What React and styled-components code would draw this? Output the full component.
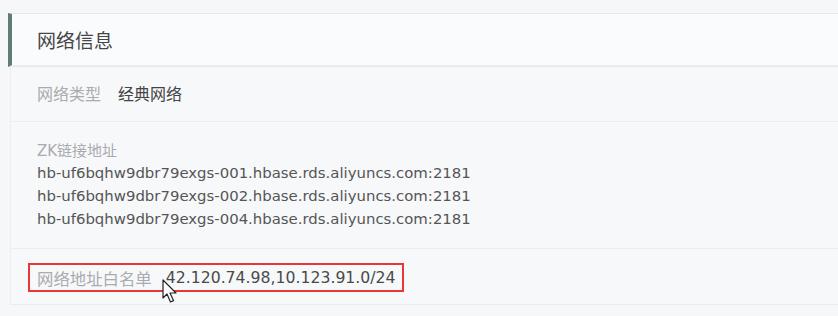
import React from "react";
import styled, { createGlobalStyle } from "styled-components";

const Global = createGlobalStyle`
  html, body { margin: 0; padding: 0; background: #f6f7f9; }
  body { font-family: "DejaVu Sans", "Noto Sans CJK SC", sans-serif; }
`;

const Page = styled.div`
  width: 838px;
  height: 316px;
  padding: 13px 0 0 8px;
  box-sizing: border-box;
  overflow: hidden;
  position: relative;
`;

const Header = styled.div`
  height: 54px;
  box-sizing: border-box;
  display: flex;
  align-items: center;
  padding-left: 25px;
  background: #fafbfc;
  border-left: 4px solid #5f7c77;
  border-top: 1px solid #e6e8eb;
  border-bottom: 2px solid #e9ebee;
  font-family: "Noto Sans CJK SC", sans-serif;
  font-size: 19px;
  color: #454545;
`;

const Body = styled.div`
  margin-left: 2px;
  border-left: 1px solid #eceef1;
  background: #f7f8fa;
`;

const Section = styled.div`
  box-sizing: border-box;
  padding: ${(p) => p.$pad || "0"};
  padding-left: 26px;
  min-height: ${(p) => p.$h || "auto"};
  display: flex;
  flex-direction: ${(p) => (p.$column ? "column" : "row")};
  align-items: ${(p) => (p.$column ? "flex-start" : "center")};
  border-bottom: 1px solid #eaecef;
`;

const Row = styled.div`
  display: flex;
  align-items: center;
  gap: ${(p) => p.$gap || "17px"};
`;

const Label = styled.span`
  font-family: "Noto Sans CJK SC", sans-serif;
  font-size: 16px;
  color: #a9abae;
  line-height: 22px;
`;

const WideLabel = styled(Label)`
  font-size: 16.4px;
`;

const ZkLabel = styled(Label)`
  font-family: "DejaVu Sans", "Noto Sans CJK SC", sans-serif;
  font-size: 15px;
`;

const Value = styled.span`
  font-family: "Noto Sans CJK SC", sans-serif;
  font-size: 16px;
  color: #444;
  line-height: 22px;
`;

const Mono = styled.div`
  font-family: "DejaVu Sans", sans-serif;
  font-size: 14.9px;
  color: #555;
  line-height: 23px;
`;

const Highlight = styled.div`
  display: inline-flex;
  align-items: center;
  gap: 14px;
  margin-left: -9px;
  padding: 1px 6px 0 7px;
  height: 29px;
  margin-top: 1px;
  box-sizing: border-box;
  border: 2px solid #ec3537;
`;

const IpValue = styled(Mono)`
  color: #4a4a4a;
  font-size: 15.7px;
`;

const Cursor = styled.svg`
  position: absolute;
  left: 162px;
  top: 279px;
`;

export default function App() {
  return (
    <>
      <Global />
      <Page>
        <Header>网络信息</Header>
        <Body>
          <Section $h="55px" style={{ paddingBottom: 2 }}>
            <Row>
              <Label>网络类型</Label>
              <Value>经典网络</Value>
            </Row>
          </Section>
          <Section $column $pad="18px 0 17px">
            <ZkLabel>ZK链接地址</ZkLabel>
            <Mono>hb-uf6bqhw9dbr79exgs-001.hbase.rds.aliyuncs.com:2181</Mono>
            <Mono>hb-uf6bqhw9dbr79exgs-002.hbase.rds.aliyuncs.com:2181</Mono>
            <Mono>hb-uf6bqhw9dbr79exgs-004.hbase.rds.aliyuncs.com:2181</Mono>
          </Section>
          <Section $h="56px">
            <Highlight>
              <WideLabel>网络地址白名单</WideLabel>
              <IpValue>42.120.74.98,10.123.91.0/24</IpValue>
            </Highlight>
          </Section>
        </Body>
        <Cursor width="16" height="25" viewBox="0 0 16 25">
          <path
            d="M1 1 L1 19 L5 15 L8.5 23 L11.5 21.6 L8 14 L14 14 Z"
            fill="#fff"
            stroke="#222"
            strokeWidth="1.2"
            strokeLinejoin="round"
          />
        </Cursor>
      </Page>
    </>
  );
}
